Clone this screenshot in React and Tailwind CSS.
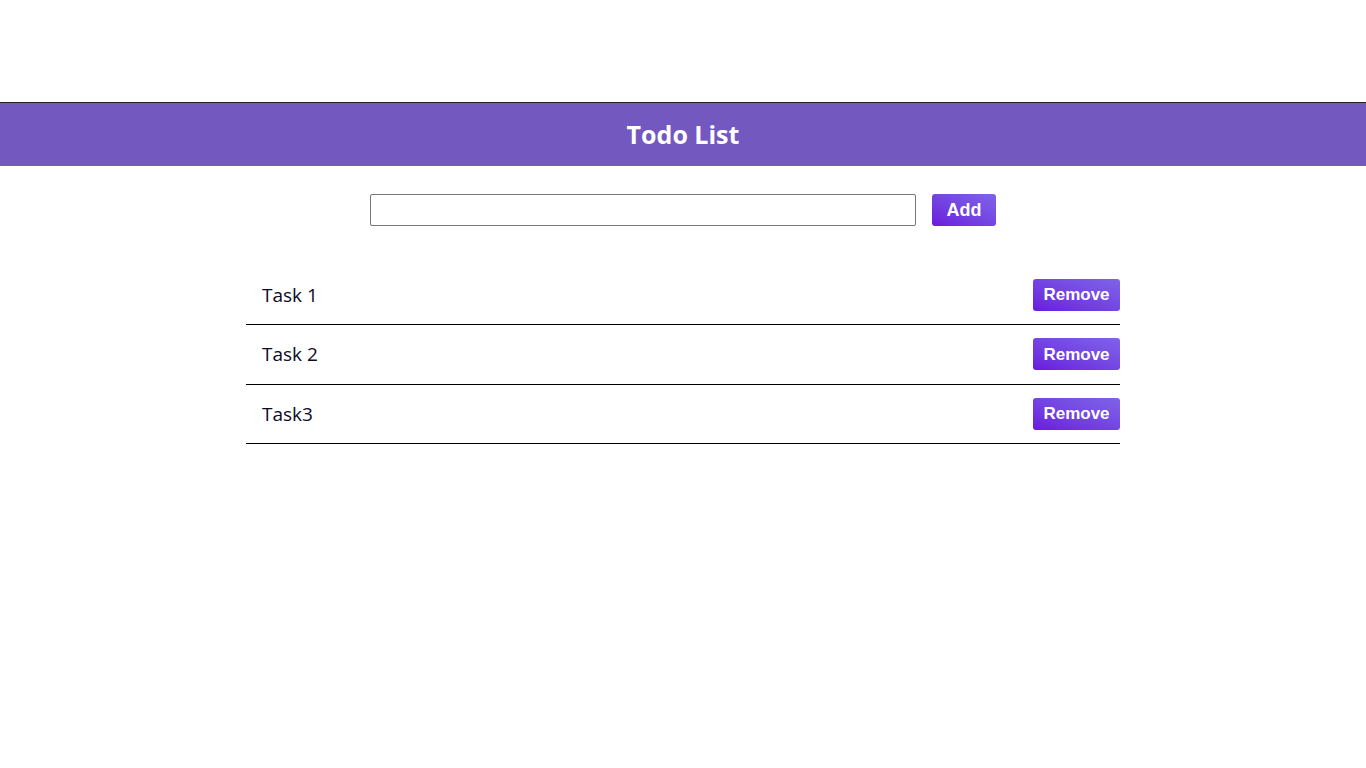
const tasks = ['Task 1', 'Task 2', 'Task3']

export default function App() {
  return (
    <div className="min-h-screen bg-white pt-[102px] font-['Open_Sans',sans-serif]">
      <header className="border-t border-[#222] bg-[#7359bf] h-[64px] flex items-center justify-center">
        <h1 className="text-white text-[25px] font-bold">Todo List</h1>
      </header>
      <form
        onSubmit={(e) => e.preventDefault()}
        className="flex items-center justify-center gap-4 mt-7"
      >
        <input className="w-[546px] h-8 border border-[#767676] rounded-[2px] outline-none px-2" />
        <button className="w-16 h-8 rounded-[3px] bg-linear-to-tr from-[#6a17dd] to-[#7f63e8] text-white text-[18px] font-bold font-['Liberation_Sans',Arial,sans-serif]">
          Add
        </button>
      </form>
      <ul className="w-[874px] mx-auto mt-[39.5px]">
        {tasks.map((t) => (
          <li
            key={t}
            className="flex items-center justify-between h-[59.5px] border-b border-black pl-4"
          >
            <span className="text-[19px] text-[#0b0b26]">{t}</span>
            <button className="w-[87px] h-8 rounded-[3px] bg-linear-to-tr from-[#6a17dd] to-[#7f63e8] text-white text-[17px] font-bold font-['Liberation_Sans',Arial,sans-serif]">
              Remove
            </button>
          </li>
        ))}
      </ul>
    </div>
  )
}
